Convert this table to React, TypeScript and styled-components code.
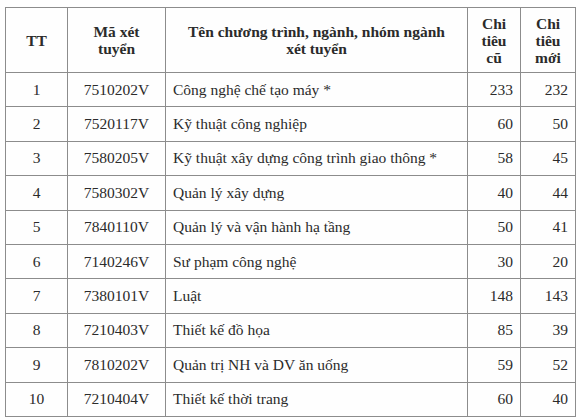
import * as React from 'react';
import styled, { createGlobalStyle } from 'styled-components';

const GlobalStyle = createGlobalStyle`
    body {
        margin: 0;
        background: #fefefe;
    }
`;

type Row = {
    no: number;
    code: string;
    name: string;
    oldQuota: number;
    newQuota: number;
};

const rows: Row[] = [
    { no: 1, code: '7510202V', name: 'Công nghệ chế tạo máy *', oldQuota: 233, newQuota: 232 },
    { no: 2, code: '7520117V', name: 'Kỹ thuật công nghiệp', oldQuota: 60, newQuota: 50 },
    { no: 3, code: '7580205V', name: 'Kỹ thuật xây dựng công trình giao thông *', oldQuota: 58, newQuota: 45 },
    { no: 4, code: '7580302V', name: 'Quản lý xây dựng', oldQuota: 40, newQuota: 44 },
    { no: 5, code: '7840110V', name: 'Quản lý và vận hành hạ tầng', oldQuota: 50, newQuota: 41 },
    { no: 6, code: '7140246V', name: 'Sư phạm công nghệ', oldQuota: 30, newQuota: 20 },
    { no: 7, code: '7380101V', name: 'Luật', oldQuota: 148, newQuota: 143 },
    { no: 8, code: '7210403V', name: 'Thiết kế đồ họa', oldQuota: 85, newQuota: 39 },
    { no: 9, code: '7810202V', name: 'Quản trị NH và DV ăn uống', oldQuota: 59, newQuota: 52 },
    { no: 10, code: '7210404V', name: 'Thiết kế thời trang', oldQuota: 60, newQuota: 40 },
];

const App: React.FC = () => {
    return (
        <Page>
            <GlobalStyle />
            <QuotaTable>
                <colgroup>
                    <Col $width={62} />
                    <Col $width={98} />
                    <Col $width={302} />
                    <Col $width={53} />
                    <Col $width={55} />
                </colgroup>
                <thead>
                    <HeaderRow>
                        <HeaderCell>TT</HeaderCell>
                        <HeaderCell>Mã xét tuyển</HeaderCell>
                        <HeaderCell>Tên chương trình, ngành, nhóm ngành xét tuyển</HeaderCell>
                        <HeaderCell $narrow>Chi tiêu cũ</HeaderCell>
                        <HeaderCell $narrow>Chi tiêu mới</HeaderCell>
                    </HeaderRow>
                </thead>
                <tbody>
                    {rows.map((row) => (
                        <BodyRow key={row.no}>
                            <Cell $align="center">{row.no}</Cell>
                            <Cell $align="center">{row.code}</Cell>
                            <Cell $align="left">{row.name}</Cell>
                            <Cell $align="right">{row.oldQuota}</Cell>
                            <Cell $align="right">{row.newQuota}</Cell>
                        </BodyRow>
                    ))}
                </tbody>
            </QuotaTable>
        </Page>
    );
};

const Page = styled.div`
    padding: 7px 0 0 5px;
`;

const QuotaTable = styled.table`
    width: 570px;
    table-layout: fixed;
    border-collapse: collapse;
    border: 1px solid #8c8c8c;
    font-family: 'Liberation Serif', 'Times New Roman', serif;
    font-size: 15.5px;
    color: #2b2b2b;
`;

const Col = styled.col<{ $width: number }>`
    width: ${(props) => props.$width}px;
`;

const HeaderRow = styled.tr`
    height: 65px;
`;

const HeaderCell = styled.th<{ $narrow?: boolean }>`
    border: 1px solid #8c8c8c;
    padding: ${(props) => (props.$narrow ? '0 8px' : '0 12px')};
    font-size: 15.5px;
    font-weight: bold;
    line-height: 17px;
    text-align: center;
    vertical-align: middle;
`;

const BodyRow = styled.tr`
    height: 34.4px;
`;

const Cell = styled.td<{ $align: 'left' | 'center' | 'right' }>`
    border: 1px solid #8c8c8c;
    padding: 0 7px;
    font-size: 15.5px;
    text-align: ${(props) => props.$align};
    vertical-align: middle;
    white-space: nowrap;
`;

export default App;
